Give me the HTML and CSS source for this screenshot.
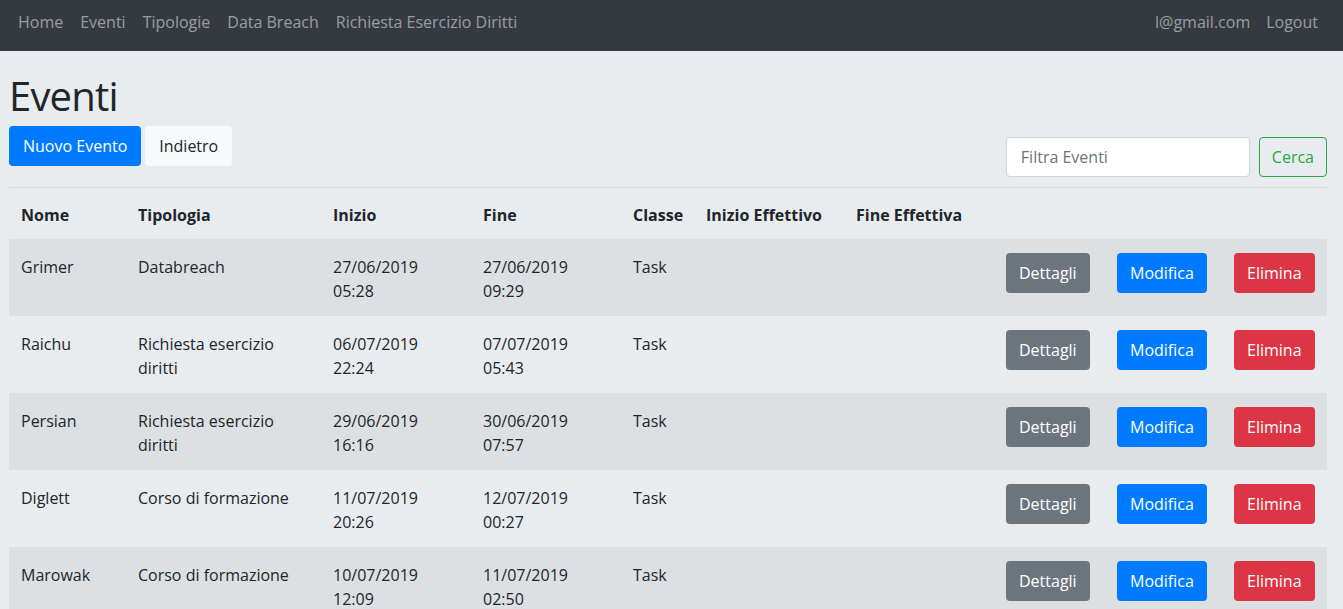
FILE: index.html
```html
<!DOCTYPE html>
<html lang="it">
<head>
<meta charset="utf-8">
<title>Eventi</title>
<link rel="stylesheet" href="styles.css">
</head>
<body>
<nav class="navbar">
  <div class="nav-left">
    <a class="nav-link" href="#">Home</a>
    <a class="nav-link" href="#">Eventi</a>
    <a class="nav-link" href="#">Tipologie</a>
    <a class="nav-link" href="#">Data Breach</a>
    <a class="nav-link" href="#">Richiesta Esercizio Diritti</a>
  </div>
  <div class="nav-right">
    <a class="nav-link" href="#">l@gmail.com</a>
    <a class="nav-link" href="#">Logout</a>
  </div>
</nav>
<main class="content">
  <div class="page-head">
    <div class="head-left">
      <h1 class="title">Eventi</h1>
      <div class="actions">
        <button class="btn btn-primary btn-wide">Nuovo Evento</button>
        <button class="btn btn-light btn-wide">Indietro</button>
      </div>
    </div>
    <form class="filter">
      <input class="filter-input" type="text" placeholder="Filtra Eventi">
      <button class="btn btn-outline-success" type="button">Cerca</button>
    </form>
  </div>
  <hr class="divider">
  <table class="events">
    <colgroup>
      <col class="c-nome"><col class="c-tipo"><col class="c-date"><col class="c-date"><col class="c-classe"><col class="c-date"><col class="c-date"><col class="c-det"><col class="c-mod"><col class="c-del">
    </colgroup>
    <thead>
      <tr><th>Nome</th><th>Tipologia</th><th>Inizio</th><th>Fine</th><th>Classe</th><th>Inizio Effettivo</th><th>Fine Effettiva</th><th></th><th></th><th></th></tr>
    </thead>
    <tbody>
      <tr><td>Grimer</td><td>Databreach</td><td>27/06/2019<br>05:28</td><td>27/06/2019<br>09:29</td><td>Task</td><td></td><td></td>
        <td class="act"><button class="btn btn-secondary">Dettagli</button></td><td class="act"><button class="btn btn-primary">Modifica</button></td><td class="act"><button class="btn btn-danger">Elimina</button></td></tr>
      <tr><td>Raichu</td><td>Richiesta esercizio diritti</td><td>06/07/2019<br>22:24</td><td>07/07/2019<br>05:43</td><td>Task</td><td></td><td></td>
        <td class="act"><button class="btn btn-secondary">Dettagli</button></td><td class="act"><button class="btn btn-primary">Modifica</button></td><td class="act"><button class="btn btn-danger">Elimina</button></td></tr>
      <tr><td>Persian</td><td>Richiesta esercizio diritti</td><td>29/06/2019<br>16:16</td><td>30/06/2019<br>07:57</td><td>Task</td><td></td><td></td>
        <td class="act"><button class="btn btn-secondary">Dettagli</button></td><td class="act"><button class="btn btn-primary">Modifica</button></td><td class="act"><button class="btn btn-danger">Elimina</button></td></tr>
      <tr><td>Diglett</td><td>Corso di formazione</td><td>11/07/2019<br>20:26</td><td>12/07/2019<br>00:27</td><td>Task</td><td></td><td></td>
        <td class="act"><button class="btn btn-secondary">Dettagli</button></td><td class="act"><button class="btn btn-primary">Modifica</button></td><td class="act"><button class="btn btn-danger">Elimina</button></td></tr>
      <tr><td>Marowak</td><td>Corso di formazione</td><td>10/07/2019<br>12:09</td><td>11/07/2019<br>02:50</td><td>Task</td><td></td><td></td>
        <td class="act"><button class="btn btn-secondary">Dettagli</button></td><td class="act"><button class="btn btn-primary">Modifica</button></td><td class="act"><button class="btn btn-danger">Elimina</button></td></tr>
    </tbody>
  </table>
</main>
</body>
</html>
```
FILE: styles.css
```css
* { box-sizing: border-box; }
html, body { margin: 0; padding: 0; }
body {
  background: #e9ecef;
  color: #212529;
  font-family: "Open Sans", "Noto Sans", sans-serif;
  font-size: 16px;
  line-height: 24px;
}
.navbar {
  height: 51px;
  background: #343a40;
  display: flex;
  justify-content: space-between;
  align-items: flex-start;
  padding: 10px 17px 0 10px;
}
.nav-left, .nav-right { display: flex; }
.nav-link {
  color: rgba(255, 255, 255, 0.5);
  text-decoration: none;
  padding: 0 8px;
  line-height: 24px;
}
.nav-left .nav-link + .nav-link { margin-left: 1px; }
.content { padding: 0 16px 0 9px; }
.page-head {
  display: flex;
  justify-content: space-between;
  align-items: flex-end;
}
.title {
  font-size: 40px;
  font-weight: 400;
  line-height: 48px;
  letter-spacing: -0.8px;
  margin: 21px 0 6px 0;
}
.actions { display: flex; gap: 4px; margin-bottom: 11px; }
.btn {
  font-family: inherit;
  font-size: 16px;
  line-height: 24px;
  padding: 7px 12px;
  border: 1px solid transparent;
  border-radius: 4px;
  cursor: pointer;
  display: inline-block;
}
.btn-wide { padding-left: 13px; padding-right: 13px; }
.btn-primary { background: #007bff; color: #fff; }
.btn-light { background: #f8f9fa; color: #212529; }
.btn-secondary { background: #6c757d; color: #fff; }
.btn-danger { background: #dc3545; color: #fff; }
.btn-outline-success { background: transparent; color: #28a745; border-color: #28a745; }
.filter { display: flex; gap: 9px; margin: 0; }
.filter-input {
  width: 244px;
  height: 40px;
  font-family: inherit;
  font-size: 16px;
  padding: 7px 14px;
  border: 1px solid #ced4da;
  border-radius: 4px;
  background: #fff;
  color: #495057;
}
.filter-input::placeholder { color: #6c757d; }
.divider {
  border: 0;
  border-top: 1px solid #d6d9dc;
  margin: 10px 0 0 0;
}
.events {
  width: 100%;
  table-layout: fixed;
  border-collapse: collapse;
}
.c-nome { width: 117px; }
.c-tipo { width: 195px; }
.c-date { width: 150px; }
.c-classe { width: 73px; }
.c-det { width: 111px; }
.c-mod { width: 117px; }
.c-del { width: 105px; }
.events th {
  text-align: left;
  font-weight: 700;
  padding: 15px 12px 12px;
  vertical-align: top;
}
.events td {
  padding: 16px 12px 13px;
  vertical-align: top;
}
.events td.act { padding-top: 14px; }
.events tbody tr:nth-child(odd) { background: rgba(0, 0, 0, 0.05); }
```
